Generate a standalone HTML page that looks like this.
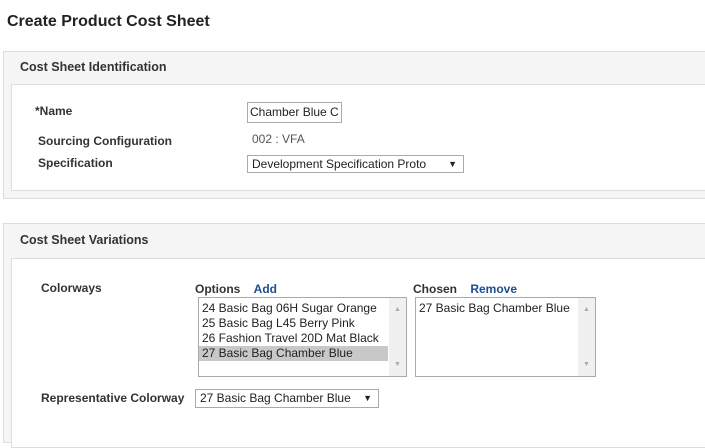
<!DOCTYPE html>
<html><head><meta charset="utf-8"><style>
*{box-sizing:border-box;margin:0;padding:0}
body{width:705px;height:421px;background:#fff;font-family:"Liberation Sans",sans-serif;color:#222;position:relative;overflow:hidden;font-size:12px}
.a{position:absolute;white-space:nowrap}
.b{font-weight:bold;color:#333}
.panel{position:absolute;border:1px solid #ddd;background:#f5f5f5}
.inner{position:absolute;background:#fff;border:1px solid #ddd}
.box{position:absolute;border:1px solid #aaa;background:#fff;padding:1px 4px;line-height:15px;white-space:nowrap;overflow:hidden}
.sb{position:absolute;right:0;top:0;bottom:0;width:17px;background:#f0f0f0}
.sb:before{content:"▲";position:absolute;top:4px;left:5px;font-size:7px;color:#aaa}
.sb:after{content:"▼";position:absolute;bottom:4px;left:5px;font-size:7px;color:#aaa}
.lnk{color:#1a4f8f;font-weight:bold}
</style></head><body>
<div class="a b" style="left:7px;top:13px;font-size:16px;color:#222">Create Product Cost Sheet</div>

<div class="panel" style="left:3px;top:51px;width:703px;height:148px"></div>
<div class="a b" style="left:20px;top:60px;font-size:12.5px">Cost Sheet Identification</div>
<div class="inner" style="left:11px;top:84px;width:695px;height:107px"></div>
<div class="a b" style="left:35px;top:104px">*Name</div>
<div class="box" style="left:247px;top:102px;width:95px;height:21px;font-size:12px;padding:2px 0 0 2px">Chamber Blue C</div>
<div class="a b" style="left:38px;top:134px">Sourcing Configuration</div>
<div class="a" style="left:252px;top:132px;color:#555">002 : VFA</div>
<div class="a b" style="left:38px;top:156px">Specification</div>
<div class="box" style="left:247px;top:155px;width:217px;height:18px">Development Specification Proto<span style="position:absolute;right:6px;font-size:9px">▼</span></div>

<div class="panel" style="left:3px;top:223px;width:703px;height:220px"></div>
<div class="a b" style="left:20px;top:233px;font-size:12.5px">Cost Sheet Variations</div>
<div class="inner" style="left:11px;top:258px;width:695px;height:190px"></div>
<div class="a b" style="left:41px;top:281px">Colorways</div>
<div class="a b" style="left:195px;top:282px">Options <span class="lnk" style="margin-left:10px">Add</span></div>
<div class="a b" style="left:413px;top:282px">Chosen <span class="lnk" style="margin-left:10px">Remove</span></div>
<div class="box" style="left:198px;top:297px;width:209px;height:80px;padding:3px 0 0 0">
<div style="padding-left:3px">24 Basic Bag 06H Sugar Orange</div>
<div style="padding-left:3px">25 Basic Bag L45 Berry Pink</div>
<div style="padding-left:3px">26 Fashion Travel 20D Mat Black</div>
<div style="padding-left:3px;background:#c8c8c8;width:189px">27 Basic Bag Chamber Blue</div>
<div class="sb"></div></div>
<div class="box" style="left:415px;top:297px;width:181px;height:80px;padding:3px 0 0 3px">27 Basic Bag Chamber Blue<div class="sb"></div></div>
<div class="a b" style="left:41px;top:391px">Representative Colorway</div>
<div class="box" style="left:195px;top:389px;width:184px;height:19px">27 Basic Bag Chamber Blue<span style="position:absolute;right:6px;font-size:9px">▼</span></div>
</body></html>
